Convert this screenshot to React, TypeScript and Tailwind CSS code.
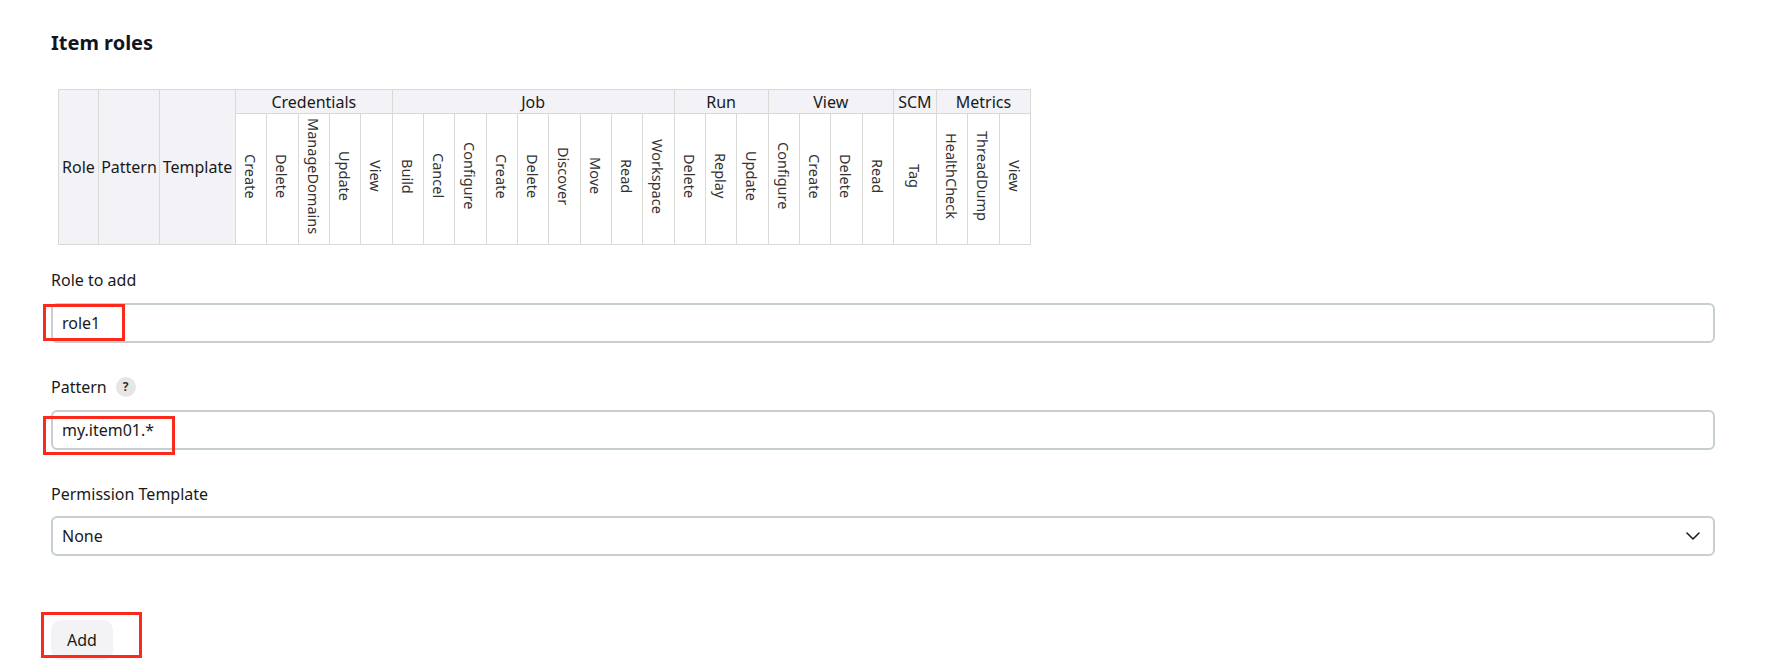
import React from "react";

type Group = { name: string; cols: string[]; wide?: boolean };

const groups: Group[] = [
  { name: "Credentials", cols: ["Create", "Delete", "ManageDomains", "Update", "View"] },
  {
    name: "Job",
    cols: ["Build", "Cancel", "Configure", "Create", "Delete", "Discover", "Move", "Read", "Workspace"],
  },
  { name: "Run", cols: ["Delete", "Replay", "Update"] },
  { name: "View", cols: ["Configure", "Create", "Delete", "Read"] },
  { name: "SCM", cols: ["Tag"], wide: true },
  { name: "Metrics", cols: ["HealthCheck", "ThreadDump", "View"] },
];

function Chevron() {
  return (
    <svg width="14" height="8" viewBox="0 0 14 8" fill="none">
      <path d="M1 1l6 6 6-6" stroke="#1f1f1f" strokeWidth="1.6" strokeLinecap="round" strokeLinejoin="round" />
    </svg>
  );
}

export default function App() {
  const hdr = "bg-[#f2f2f7] border border-[#d9d9d6] font-normal text-[16px] p-0 text-center align-middle";
  return (
    <div className="w-[1773px] h-[665px] overflow-hidden bg-white text-[#1a1a1a] font-['Noto_Sans',sans-serif] pl-[51px] pr-[58px]">
      <h2 className="pt-[29px] text-[20px] leading-[28px] font-bold text-[#14141f]">Item roles</h2>

      <table className="table-fixed border-collapse w-[973px] ml-[7px] mt-[32px]">
        <colgroup>
          <col className="w-[40px]" />
          <col className="w-[61px]" />
          <col className="w-[76px]" />
          {groups.flatMap((g) =>
            g.cols.map((c, i) => (
              <col key={g.name + c + i} className={g.wide ? "w-[43px]" : "w-[31.33px]"} />
            ))
          )}
        </colgroup>
        <thead>
          <tr className="h-[24px]">
            <th rowSpan={2} className={hdr}>Role</th>
            <th rowSpan={2} className={hdr}>Pattern</th>
            <th rowSpan={2} className={hdr}>Template</th>
            {groups.map((g) => (
              <th key={g.name} colSpan={g.cols.length} className={hdr + " leading-[22px]"}>
                {g.name}
              </th>
            ))}
          </tr>
          <tr className="h-[131px]">
            {groups.flatMap((g) =>
              g.cols.map((c, i) => (
                <th
                  key={g.name + c + i}
                  className="border border-[#d9d9d6] bg-white font-normal p-0 text-center align-middle"
                >
                  <span className="inline-block [writing-mode:vertical-rl] text-[14.5px] leading-[18px] text-[#333]">
                    {c}
                  </span>
                </th>
              ))
            )}
          </tr>
        </thead>
      </table>

      <div className="mt-[23px] text-[16px] leading-[24px]">Role to add</div>
      <div className="relative mt-[11px]">
        <div className="h-[40px] w-full border-2 border-[#c6ced2] rounded-[6px] flex items-center pl-[9px] text-[16px]">
          role1
        </div>
        <div className="absolute left-[-8px] top-[1px] w-[82px] h-[37px] border-[3px] border-[#fb2a1c]" />
      </div>

      <div className="mt-[32px] flex items-center gap-[9px] text-[16px] leading-[24px]">
        <span>Pattern</span>
        <span className="w-[20px] h-[20px] rounded-full bg-[#e6e6e6] flex items-center justify-center text-[12px] font-bold text-[#333]">
          ?
        </span>
      </div>
      <div className="relative mt-[11px]">
        <div className="h-[40px] w-full border-2 border-[#c6ced2] rounded-[6px] flex items-center pl-[9px] text-[16px]">
          my.item01.*
        </div>
        <div className="absolute left-[-8px] top-[6px] w-[132px] h-[39px] border-[3px] border-[#fb2a1c]" />
      </div>

      <div className="mt-[32px] text-[16px] leading-[24px]">Permission Template</div>
      <div className="mt-[10px] h-[40px] w-full border-2 border-[#c6ced2] rounded-[6px] flex items-center justify-between pl-[9px] pr-[13px] text-[16px]">
        <span>None</span>
        <Chevron />
      </div>

      <div className="relative mt-[64px] w-fit">
        <div className="h-[40px] px-[16px] rounded-[10px] bg-[#f3f3f6] flex items-center text-[16px]">Add</div>
        <div className="absolute left-[-10px] top-[-8px] w-[101px] h-[46px] border-[3px] border-[#fb2a1c]" />
      </div>
    </div>
  );
}
